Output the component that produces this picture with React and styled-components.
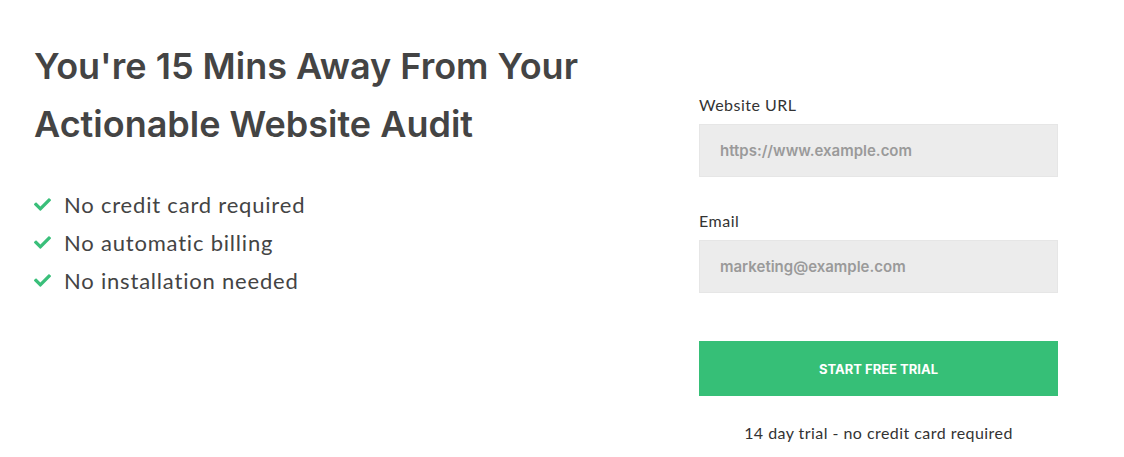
import React from 'react'
import styled, { createGlobalStyle } from 'styled-components'
import { FaCheck } from 'react-icons/fa'

const GlobalStyle = createGlobalStyle`
    body {
        margin: 0;
        background: #ffffff;
        font-family: "Lato", "Open Sans", sans-serif;
    }
`

const perks = ['No credit card required', 'No automatic billing', 'No installation needed']

const App = () => {
    return (
        <>
            <GlobalStyle />
            <Section>
                <Intro>
                    <Heading>You're 15 Mins Away From Your Actionable Website Audit</Heading>
                    <PerkList>
                        {perks.map(p => (
                            <Perk key={p}>
                                <CheckIcon><FaCheck /></CheckIcon>
                                {p}
                            </Perk>
                        ))}
                    </PerkList>
                </Intro>

                <Form onSubmit={e => e.preventDefault()}>
                    <Field>
                        <Label>Website URL</Label>
                        <Input type="text" placeholder="https://www.example.com" />
                    </Field>
                    <Field>
                        <Label>Email</Label>
                        <Input type="email" placeholder="marketing@example.com" />
                    </Field>
                    <SubmitButton type="submit">START FREE TRIAL</SubmitButton>
                    <Note>14 day trial - no credit card required</Note>
                </Form>
            </Section>
        </>
    )
}

const Section = styled.div`
    display: flex;
    padding: 37px 0 0 34px;
`

const Intro = styled.div`
    flex: 0 0 665px;
`

const Heading = styled.h1`
    margin: 0;
    width: 580px;
    font-family: "Inter", "Open Sans", sans-serif;
    font-weight: 600;
    font-size: 36px;
    line-height: 58px;
    color: #444444;
`

const PerkList = styled.ul`
    list-style: none;
    margin: 32px 0 0 0;
    padding: 0;
`

const Perk = styled.li`
    display: flex;
    align-items: center;
    height: 38px;
    font-size: 22px;
    letter-spacing: 0.8px;
    color: #444444;
`

const CheckIcon = styled.span`
    display: flex;
    width: 30px;
    color: #3abf7a;
    font-size: 17px;
`

const Form = styled.form`
    width: 359px;
    display: flex;
    flex-direction: column;
    padding-top: 56px;
`

const Field = styled.div`
    display: flex;
    flex-direction: column;
    gap: 7px;
    margin-bottom: 32px;

    &:nth-of-type(2) {
        margin-bottom: 48px;
    }
`

const Label = styled.label`
    font-size: 16px;
    line-height: 24px;
    letter-spacing: 0.5px;
    color: #333333;
`

const Input = styled.input`
    box-sizing: border-box;
    height: 53px;
    width: 100%;
    border: 1px solid #e6e6e6;
    background: #ececec;
    padding: 0 20px;
    font-family: "Inter", sans-serif;
    font-weight: 600;
    font-size: 15px;
    color: #444444;
    outline: none;

    &::placeholder {
        color: #9a9a9a;
    }
`

const SubmitButton = styled.button`
    height: 55px;
    width: 100%;
    border: none;
    background: #36bf77;
    color: #ffffff;
    font-family: "Inter", sans-serif;
    font-weight: 700;
    font-size: 13px;
    cursor: pointer;
`

const Note = styled.p`
    margin: 25px 0 0 0;
    text-align: center;
    font-size: 16px;
    line-height: 24px;
    letter-spacing: 0.45px;
    color: #333333;
`

export default App
